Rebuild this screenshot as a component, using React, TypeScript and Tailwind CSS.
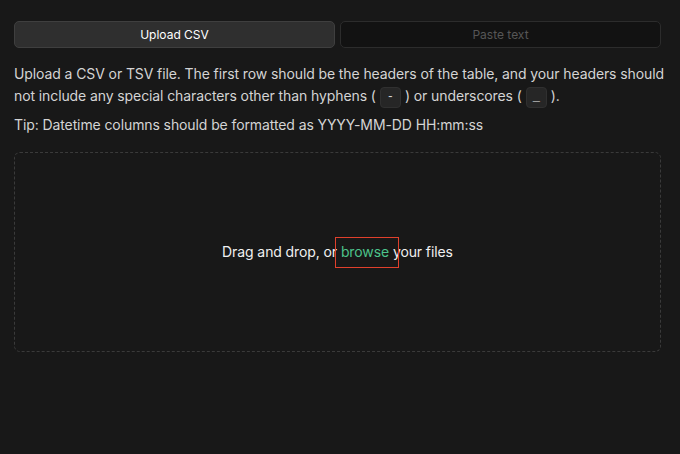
export default function App() {
  return (
    <div
      className="w-[680px] h-[454px] bg-[#181818] pl-[14px] pr-[19px] pt-[21px] text-[#d4d4d4]"
      style={{ fontFamily: "Inter, 'Noto Sans', sans-serif" }}
    >
      {/* Tabs */}
      <div className="grid grid-cols-2 gap-[5px]">
        <button className="h-[27px] rounded-[5px] border border-[#3f3f3f] bg-[#2f2f2f] text-[12px] text-white">
          Upload CSV
        </button>
        <button className="h-[27px] rounded-[5px] border border-[#2c2c2c] bg-[#121212] text-[12px] text-[#565656]">
          Paste text
        </button>
      </div>

      {/* Description */}
      <p className="mt-[15px] -mr-[6px] text-[14px] leading-[22px] tracking-[-0.1px]">
        Upload a CSV or TSV file. The first row should be the headers of the table, and your headers should
        not include any special characters other than hyphens (
        <code className="mx-[4px] inline-block h-[21px] rounded-[4px] border border-[#303030] bg-[#262626] px-[6px] align-middle text-[12px] leading-[19px]">
          -
        </code>
        ) or underscores (
        <code className="mx-[4px] inline-block h-[21px] rounded-[4px] border border-[#303030] bg-[#262626] px-[6px] align-middle text-[12px] leading-[19px]">
          _
        </code>
        ).
      </p>
      <p className="mt-[6px] text-[14px] leading-[22px] tracking-[-0.1px]">
        Tip: Datetime columns should be formatted as YYYY-MM-DD HH:mm:ss
      </p>

      {/* Dropzone */}
      <div className="mt-[16px] flex h-[200px] items-center justify-center rounded-[6px] border border-dashed border-[#3a3a3a]">
        <p className="text-[14px] text-[#f0f0f0] tracking-[-0.1px]">
          Drag and drop, or{" "}
          <span className="relative text-[#4cc38a]">
            browse
            <span className="absolute -left-[6px] -right-[10px] -top-[6px] -bottom-[8px] border border-[#e0402c]" />
          </span>{" "}
          your files
        </p>
      </div>
    </div>
  );
}
